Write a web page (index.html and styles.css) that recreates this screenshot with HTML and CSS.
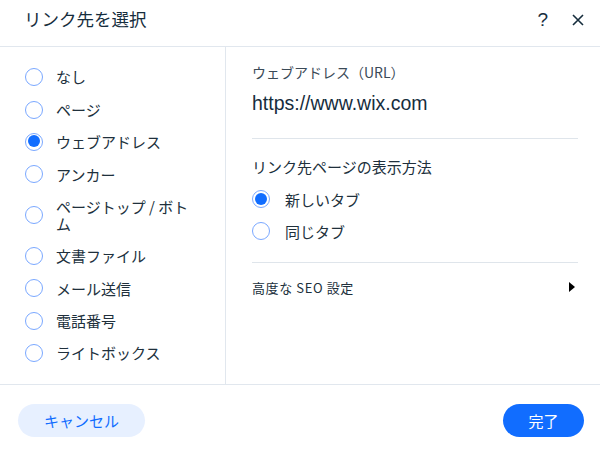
FILE: index.html
```html
<!DOCTYPE html>
<html lang="ja">
<head>
<meta charset="utf-8">
<title>リンク先を選択</title>
<link rel="stylesheet" href="styles.css">
</head>
<body>
<div class="dialog">
  <header class="header">
    <h1 class="title">リンク先を選択</h1>
    <div class="header-actions">
      <span class="help">?</span>
      <svg class="close" width="12" height="12" viewBox="0 0 12 12"><path d="M1 1L11 11M11 1L1 11" stroke="#162d3d" stroke-width="1.6" fill="none"/></svg>
    </div>
  </header>
  <main class="main">
    <ul class="options">
      <li class="option"><span class="radio"></span><span class="opt-label">なし</span></li>
      <li class="option"><span class="radio"></span><span class="opt-label">ページ</span></li>
      <li class="option"><span class="radio checked"></span><span class="opt-label">ウェブアドレス</span></li>
      <li class="option"><span class="radio"></span><span class="opt-label">アンカー</span></li>
      <li class="option"><span class="radio"></span><span class="opt-label">ページトップ / ボトム</span></li>
      <li class="option"><span class="radio"></span><span class="opt-label">文書ファイル</span></li>
      <li class="option"><span class="radio"></span><span class="opt-label">メール送信</span></li>
      <li class="option"><span class="radio"></span><span class="opt-label">電話番号</span></li>
      <li class="option"><span class="radio"></span><span class="opt-label">ライトボックス</span></li>
    </ul>
    <section class="panel">
      <div class="field-label">ウェブアドレス（URL）</div>
      <div class="url">https://www.wix.com</div>
      <hr class="divider">
      <div class="section-label">リンク先ページの表示方法</div>
      <div class="tab-options">
        <div class="tab-option"><span class="radio checked"></span><span class="opt-label">新しいタブ</span></div>
        <div class="tab-option"><span class="radio"></span><span class="opt-label">同じタブ</span></div>
      </div>
      <hr class="divider divider-2">
      <div class="seo-row">
        <span class="seo-label">高度な SEO 設定</span>
        <span class="arrow"></span>
      </div>
    </section>
  </main>
  <footer class="footer">
    <button class="btn btn-secondary">キャンセル</button>
    <button class="btn btn-primary">完了</button>
  </footer>
</div>
</body>
</html>
```
FILE: styles.css
```css
* { box-sizing: border-box; }
html, body { margin: 0; padding: 0; background: #fff; }
body {
  font-family: "Noto Sans CJK JP", "Liberation Sans", sans-serif;
  color: #20303c;
  width: 600px;
  height: 456px;
  overflow: hidden;
}
.dialog { width: 600px; height: 456px; display: flex; flex-direction: column; }

.header {
  height: 47px;
  border-bottom: 1px solid #e1e7ee;
  display: flex;
  justify-content: space-between;
  align-items: flex-start;
  padding: 0 16px 0 24px;
}
.title {
  margin: 7px 0 0;
  font-size: 17.5px;
  line-height: 24px;
  font-weight: 400;
  color: #162d3d;
}
.header-actions {
  display: flex;
  align-items: center;
  gap: 24px;
  margin-top: 9px;
  height: 22px;
}
.help {
  font-family: "Liberation Sans", sans-serif;
  font-size: 19px;
  line-height: 22px;
  color: #162d3d;
  font-weight: 300;
}
.close { display: block; }

.main {
  height: 338px;
  border-bottom: 1px solid #e1e7ee;
  display: flex;
}
.options {
  list-style: none;
  margin: 0;
  padding: 14px 24px 0 25px;
  width: 226px;
  border-right: 1px solid #e1e7ee;
}
.option {
  display: flex;
  align-items: center;
  gap: 13px;
  padding: 7.2px 0;
  font-size: 15px;
  line-height: 17.5px;
}
.radio {
  flex: none;
  width: 18px;
  height: 18px;
  border-radius: 50%;
  border: 1.5px solid #7aa8ff;
  background: #fff;
  position: relative;
}
.radio.checked::after {
  content: "";
  position: absolute;
  left: 1.5px;
  top: 1.5px;
  width: 12px;
  height: 12px;
  border-radius: 50%;
  background: #116dff;
}
.opt-label { flex: 1; }

.panel {
  flex: 1;
  padding: 15px 22px 0 26px;
}
.field-label {
  font-size: 14px;
  line-height: 20px;
  color: #3b4a57;
}
.url {
  margin-top: 9px;
  font-family: "Liberation Sans", sans-serif;
  font-size: 19.5px;
  line-height: 24px;
  color: #162d3d;
}
.divider {
  margin: 23px 0 0;
  border: 0;
  border-top: 1px solid #dfe5eb;
  height: 0;
}
.section-label {
  margin-top: 18px;
  font-size: 15px;
  line-height: 20px;
  color: #20303c;
}
.tab-options { margin-top: 6px; }
.tab-option {
  display: flex;
  align-items: center;
  gap: 15px;
  height: 32px;
  font-size: 15px;
}
.divider-2 { margin-top: 15px; }
.seo-row {
  margin-top: 14px;
  display: flex;
  justify-content: space-between;
  align-items: center;
  height: 20px;
  padding-right: 3px;
}
.seo-label {
  font-size: 13px;
  letter-spacing: 0.6px;
  color: #20303c;
}
.arrow {
  width: 0;
  height: 0;
  border-top: 5px solid transparent;
  border-bottom: 5px solid transparent;
  border-left: 6px solid #000;
}

.footer {
  flex: 1;
  display: flex;
  justify-content: space-between;
  align-items: center;
  padding: 0 16px 0 18px;
}
.btn {
  font-family: "Noto Sans CJK JP", sans-serif;
  font-size: 15px;
  height: 33px;
  border: 0;
  border-radius: 17px;
  padding: 0;
}
.btn-secondary {
  width: 127px;
  background: #e7f0ff;
  color: #116dff;
}
.btn-primary {
  width: 81px;
  background: #116dff;
  color: #fff;
}
```
